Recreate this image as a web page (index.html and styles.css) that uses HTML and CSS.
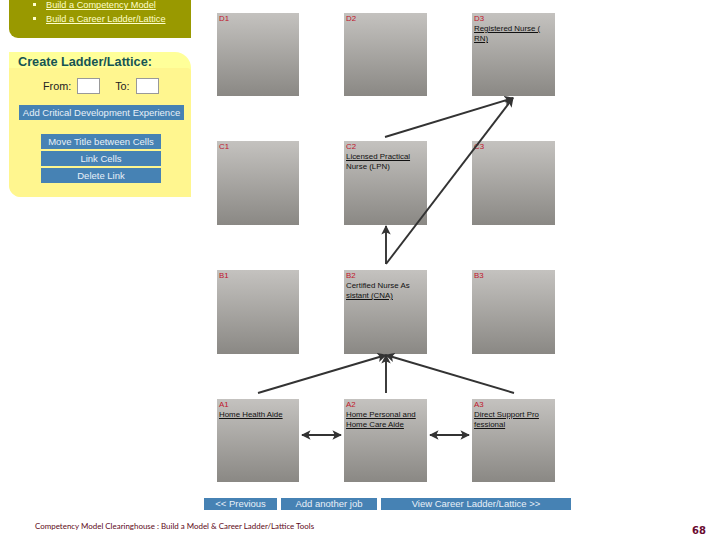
FILE: index.html
```html
<!DOCTYPE html>
<html lang="en">
<head>
<meta charset="utf-8">
<title>Career Ladder/Lattice</title>
<link rel="stylesheet" href="styles.css">
</head>
<body>
<div class="slide">
  <aside class="side">
    <ul class="menu">
      <li><a>Build a Competency Model</a></li>
      <li><a>Build a Career Ladder/Lattice</a></li>
    </ul>
    <section class="create">
      <h2>Create Ladder/Lattice:</h2>
      <div class="panel">
        <div class="fromto">
          <label>From:</label><span class="box"></span>
          <label class="to">To:</label><span class="box"></span>
        </div>
        <div class="btn wide">Add Critical Development Experience</div>
        <div class="stack">
          <div class="btn">Move Title between Cells</div>
          <div class="btn">Link Cells</div>
          <div class="btn">Delete Link</div>
        </div>
      </div>
    </section>
  </aside>
  <main class="main">
    <div class="grid">
      <div class="cell"><b>D1</b></div>
      <div class="cell"><b>D2</b></div>
      <div class="cell"><b>D3</b><u>Registered Nurse (<br>RN)</u></div>
      <div class="cell"><b>C1</b></div>
      <div class="cell"><b>C2</b><u>Licensed Practical</u><br>Nurse (LPN)</div>
      <div class="cell"><b>C3</b></div>
      <div class="cell"><b>B1</b></div>
      <div class="cell"><b>B2</b>Certified Nurse As<br><u>sistant (CNA)</u></div>
      <div class="cell"><b>B3</b></div>
      <div class="cell"><b>A1</b><u>Home Health Aide</u></div>
      <div class="cell"><b>A2</b><u>Home Personal and<br>Home Care Aide</u></div>
      <div class="cell"><b>A3</b><u>Direct Support Pro<br>fessional</u></div>
    </div>
    <nav class="nav">
      <div class="btn prev">&lt;&lt; Previous</div>
      <div class="btn add">Add another job</div>
      <div class="btn view">View Career Ladder/Lattice &gt;&gt;</div>
    </nav>
  </main>
  <footer class="foot">
    <span>Competency Model Clearinghouse : Build a Model &amp; Career Ladder/Lattice Tools</span>
    <span class="num">68</span>
  </footer>
  <svg class="arrows" width="720" height="540" viewBox="0 0 720 540" aria-hidden="true">
    <defs>
      <marker id="head" markerWidth="5" markerHeight="5" refX="4.5" refY="2.5" orient="auto-start-reverse">
        <path d="M0 0L5 2.5L0 5L1.2 2.5Z" fill="#333"/>
      </marker>
    </defs>
    <g stroke="#333" stroke-width="1.9" fill="none">
      <path d="M385 137L513 98" marker-end="url(#head)"/>
      <path d="M386 264L513 98" marker-end="url(#head)"/>
      <path d="M386 264V226" marker-end="url(#head)"/>
      <path d="M258 393L386 355" marker-end="url(#head)"/>
      <path d="M386 393V355" marker-end="url(#head)"/>
      <path d="M514 393L386 355" marker-end="url(#head)"/>
      <path d="M302 435H341" marker-start="url(#head)" marker-end="url(#head)"/>
      <path d="M430 435H469" marker-start="url(#head)" marker-end="url(#head)"/>
    </g>
  </svg>
</div>
</body>
</html>
```
FILE: styles.css
```css
* { box-sizing: border-box; }
html, body { margin: 0; padding: 0; background: #fff; }
.slide {
  position: relative;
  width: 720px;
  height: 540px;
  overflow: hidden;
  display: grid;
  grid-template-columns: 204px 516px;
  grid-template-rows: 516px 24px;
  font-family: "Liberation Sans", Arial, sans-serif;
}
.side { padding-left: 9px; padding-right: 13px; }
.menu {
  margin: 0;
  height: 38px;
  padding: 0 0 0 37px;
  background: #999900;
  border-bottom-left-radius: 9px;
  list-style: none;
  color: #ffffcc;
  font-size: 9.2px;
  line-height: 14px;
}
.menu li { position: relative; top: -2px; }
.menu li::before {
  content: "";
  position: absolute;
  left: -13px;
  top: 5px;
  width: 3px;
  height: 3px;
  background: #ffffcc;
}
.menu a { text-decoration: underline; }
.create {
  margin-top: 14px;
  height: 145px;
  background: #ffff99;
  border-radius: 0 16px 0 12px;
  overflow: hidden;
}
.create h2 {
  margin: 0;
  height: 16px;
  padding: 4px 0 0 9px;
  font-size: 12.7px;
  line-height: 13px;
  font-weight: bold;
  color: #165454;
  white-space: nowrap;
}
.panel {
  height: 129px;
  padding: 10px 9px 0 9px;
  background: #fff68f;
  border-radius: 0 4px 0 0;
}
.fromto {
  display: flex;
  align-items: center;
  font-size: 10.8px;
  padding-left: 25px;
  color: #222;
}
.box {
  width: 23px;
  height: 16px;
  margin-left: 6px;
  background: #fff;
  border: 1px solid #999;
}
.to { margin-left: 15px; }
.btn {
  background: #4682b4;
  color: #e8f0f8;
  font-size: 9.5px;
  line-height: 15px;
  height: 15px;
  text-align: center;
  white-space: nowrap;
}
.wide { margin-top: 11px; margin-left: 1px; width: 165px; }
.stack {
  margin: 14px 0 0 23px;
  width: 120px;
  display: flex;
  flex-direction: column;
  gap: 2px;
}
.main { padding-top: 13px; }
.grid {
  margin-left: 13px;
  width: 338px;
  display: grid;
  grid-template-columns: 82px 83px 83px;
  grid-template-rows: 83px 84px 84px 83px;
  column-gap: 45px;
  row-gap: 45px;
}
.cell {
  background: linear-gradient(#c4c2bf, #8a8884);
  padding: 1px 2px;
  font-size: 7.9px;
  line-height: 10px;
  color: #111;
  overflow: hidden;
  white-space: nowrap;
}
.cell b { display: block; font-weight: normal; color: #c0142a; }
.nav {
  display: flex;
  margin-top: 16px;
  gap: 4px;
}
.nav .btn { height: 12px; line-height: 12px; }
.prev { width: 73px; }
.add { width: 96px; }
.view { width: 190px; }
.foot {
  grid-column: 1 / 3;
  display: flex;
  justify-content: space-between;
  padding: 4px 14px 0 35px;
  font-family: "Lato", sans-serif;
  font-size: 7.95px;
  line-height: 12px;
  color: #600a20;
}
.num { font-family: "DejaVu Sans", sans-serif; font-size: 10px; font-weight: bold; color: #6a0a30; line-height: 16px; margin-top: 3px; }
.arrows { position: absolute; left: 0; top: 0; pointer-events: none; }
```
